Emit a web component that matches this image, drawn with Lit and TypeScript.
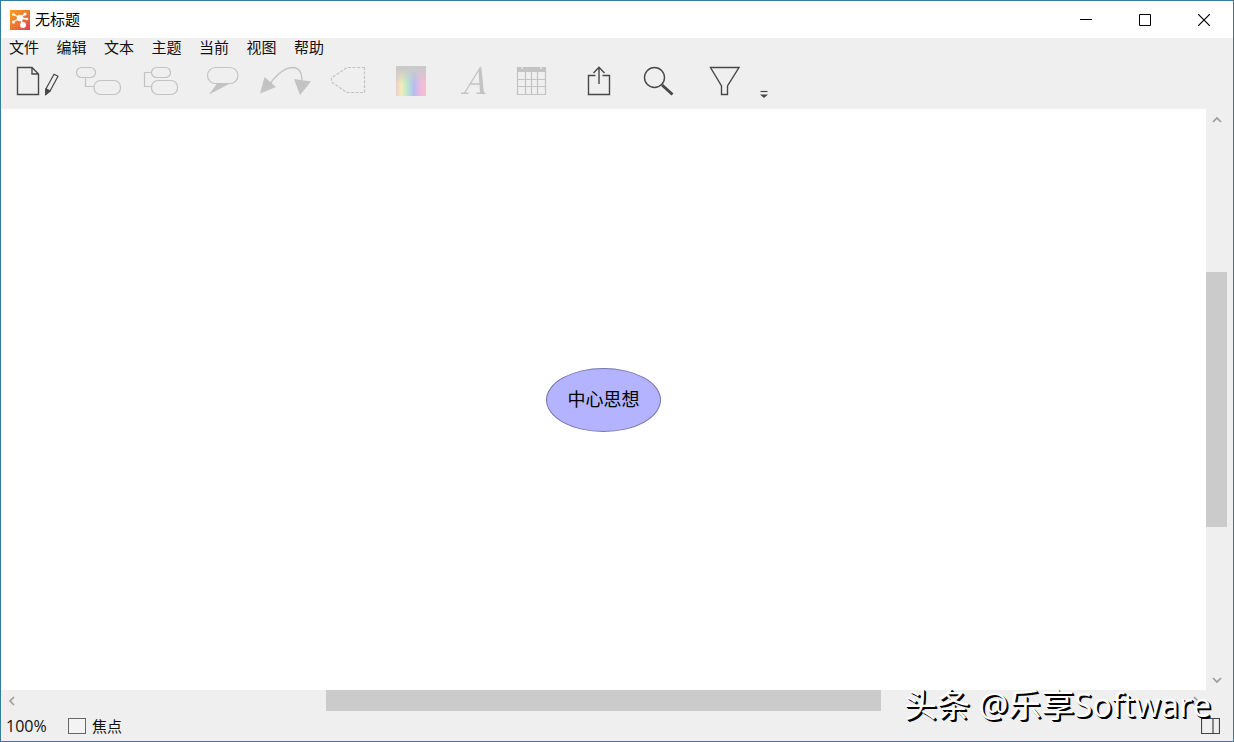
import { LitElement, html, css, svg } from "lit";
import { customElement } from "lit/decorators.js";

const UI_FONT = css`"Noto Sans CJK SC", sans-serif`;

interface Tool {
  name: string;
  left: number;
  width: number;
  enabled: boolean;
  art: unknown;
}

// Every glyph is drawn on the shared grid of the tool strip, which is 44 units high;
// `left` and `width` cut out the part that belongs to the button.
const TOOLS: Tool[] = [
  {
    name: "新建", left: 8, width: 60, enabled: true,
    art: svg`<path d="M17.5 7.5H32L38.5 14V34.5H17.5Z M32 7.5V14H38.5" stroke-width="1.4"/>
      <path d="M54 14.2L58 16.3L50 31L46 34.2L45.8 29.2Z M46.2 29L50 31" stroke-width="1.2"/>
      <path d="M45.8 29.2L50 31L45.6 34.5Z" fill="currentColor"/>`,
  },
  {
    name: "子主题", left: 68, width: 64, enabled: false,
    art: svg`<rect x="76.5" y="7.5" width="19" height="10" rx="5"/>
      <rect x="94" y="20.5" width="26.5" height="14" rx="6.5"/>
      <path d="M85.5 17.5V26.5H94"/>`,
  },
  {
    name: "同级主题", left: 132, width: 60, enabled: false,
    art: svg`<rect x="151.5" y="7.5" width="19" height="10" rx="5"/>
      <rect x="151.5" y="20.5" width="26" height="14" rx="6.5"/>
      <path d="M151.5 12.5H144.5V26.5H151.5"/>`,
  },
  {
    name: "标注", left: 192, width: 60, enabled: false,
    art: svg`<rect x="207.5" y="7.5" width="30.5" height="16" rx="8"/>
      <path d="M217 23.5L209 34.5L230 23.5Z" fill="currentColor" stroke="none"/>`,
  },
  {
    name: "关联", left: 252, width: 68, enabled: false,
    art: svg`<path d="M269 25C277 14 285 7.5 293 7.5Q302 8 302 21" stroke-width="1.3"/>
      <path d="M264.5 17L276 27L260 33.5Z M294 19L311 21.5L300 35Z" fill="currentColor" stroke="none"/>`,
  },
  {
    name: "边界", left: 320, width: 60, enabled: false,
    art: svg`<path d="M364.5 7.5H347L331.5 18V22L347 32.5H364.5Z" stroke-dasharray="3 1.5"/>`,
  },
  {
    name: "颜色", left: 380, width: 60, enabled: false,
    art: svg`<defs>
        <linearGradient id="hue">
          <stop offset="0" stop-color="#efcaca"/><stop offset=".18" stop-color="#f3edb8"/>
          <stop offset=".38" stop-color="#b9e8cc"/><stop offset=".6" stop-color="#b5bdf2"/>
          <stop offset=".82" stop-color="#efb9df"/><stop offset="1" stop-color="#f2c3cb"/>
        </linearGradient>
        <linearGradient id="grey" x2="0" y2="1">
          <stop offset=".1" stop-color="#cacaca"/><stop offset=".6" stop-color="#cacaca" stop-opacity="0"/>
        </linearGradient>
      </defs>
      <rect x="396" y="6" width="30" height="30" fill="url(#hue)" stroke="none"/>
      <rect x="396" y="6" width="30" height="30" fill="url(#grey)" stroke="none"/>`,
  },
  {
    name: "字体", left: 440, width: 64, enabled: false,
    art: svg`<path d="M464.5 33L480 8L482 33M470 24H481" stroke-width="1.3"/>
      <path d="M478.5 10L481.3 7L484 33H480Z" fill="currentColor" stroke="none"/>
      <path d="M461 33.3H468.5M476.5 33.3H485.5" stroke-width="1.4"/>`,
  },
  {
    name: "表格", left: 504, width: 60, enabled: false,
    art: svg`<path d="M517.5 7.5H545.5V34.5H517.5ZM517.5 19.5H545.5M517.5 26.5H545.5M525.5 11V34.5M531.5 11V34.5M537.5 11V34.5"/>
      <path d="M517 8H546V12H517Z" fill="currentColor" stroke="none"/>
      <path d="M522 7V9M541 7V9" stroke="#efefef"/>`,
  },
  {
    name: "共享", left: 564, width: 64, enabled: true,
    art: svg`<path d="M595.5 15.5H588.5V34.5H609.5V15.5H602.5M599 24V7.5M593.5 13L599 7.3L604.5 13" stroke-width="1.4"/>`,
  },
  {
    name: "查找", left: 628, width: 64, enabled: true,
    art: svg`<circle cx="654.5" cy="17.5" r="10" stroke-width="1.4"/>
      <path d="M662 25L672.5 34.5" stroke-width="3"/>`,
  },
  {
    name: "筛选", left: 692, width: 64, enabled: true,
    art: svg`<path d="M710.5 7.5H739L727.5 26V34.5H721.5V26Z" stroke-width="1.4"/>`,
  },
  {
    name: "更多工具", left: 756, width: 16, enabled: true,
    art: svg`<path d="M760.5 31.5H767.5"/><path d="M760 34.5H768L764 38Z" fill="currentColor" stroke="none"/>`,
  },
];

@customElement("scroll-bar")
class ScrollBar extends LitElement {
  static properties = { vertical: { type: Boolean, reflect: true } };
  declare vertical: boolean;

  static styles = css`
    :host { display: flex; background: #efefef; height: 21px; }
    :host([vertical]) { flex-direction: column; width: 21px; height: auto; }
    .step {
      flex: none; display: grid; place-items: center; width: 21px; height: 21px;
      padding: 0; border: 0; background: none; color: #9a9a9a;
    }
    .track { flex: 1; display: flex; justify-content: center; }
    .thumb { width: 47.7%; background: #cbcbcb; }
    :host([vertical]) .track { flex-direction: column; }
    :host([vertical]) .thumb { width: auto; height: 47.3%; }
    svg { fill: none; stroke: currentColor; stroke-width: 1.6; }
  `;

  render() {
    const back = this.vertical ? "M2 8L6 4L10 8" : "M8 2L4 6L8 10";
    const ahead = this.vertical ? "M2 4L6 8L10 4" : "M4 2L8 6L4 10";
    return html`
      <button class="step" aria-label=${this.vertical ? "向上" : "向左"}>
        <svg width="12" height="12"><path d=${back}></path></svg>
      </button>
      <div class="track"><div class="thumb"></div></div>
      <button class="step" aria-label=${this.vertical ? "向下" : "向右"}>
        <svg width="12" height="12"><path d=${ahead}></path></svg>
      </button>`;
  }
}

@customElement("tool-strip")
class ToolStrip extends LitElement {
  static styles = css`
    :host { display: flex; height: 49px; padding-left: 7px; box-sizing: border-box; }
    .tool { flex: none; display: block; padding: 0; border: 0; background: none; height: 44px; color: #484848; }
    .tool:disabled { color: #c3c3c3; }
    svg { display: block; fill: none; stroke: currentColor; stroke-width: 1.2; }
  `;

  render() {
    return TOOLS.map(
      (t) => html`<button class="tool" aria-label=${t.name} ?disabled=${!t.enabled}>
        <svg width=${t.width} height="44" viewBox="${t.left} 0 ${t.width} 44">${t.art}</svg>
      </button>`,
    );
  }
}

@customElement("app-root")
class AppRoot extends LitElement {
  static styles = css`
    :host {
      display: flex; flex-direction: column; position: relative; box-sizing: border-box;
      height: 100vh; border: 1px solid #357b9c; background: #efefef; color: #111;
      font: 15px/20px ${UI_FONT};
    }
    button { font: inherit; color: inherit; padding: 0; border: 0; background: none; }
    svg { display: block; fill: none; stroke: currentColor; }
    .titlebar { display: flex; align-items: center; height: 37px; background: #fff; color: #000; }
    .logo { margin: 0 5px 0 9px; }
    .title { flex: 1; margin: 0; padding-bottom: 2px; font-size: 15px; font-weight: 400; }
    .caption { width: 59px; height: 37px; display: grid; place-items: center; }
    .menubar {
      display: flex; justify-content: space-between; align-items: flex-start;
      width: 315px; height: 22px; margin-left: 8px; line-height: 18px;
    }
    .workspace { flex: 1; min-height: 0; display: grid; grid-template: 1fr 21px / 1fr 21px; padding-right: 6px; }
    .canvas { background: #fff; display: grid; place-items: center; }
    .node {
      display: grid; place-items: center; width: 115px; height: 64px; padding-bottom: 4px; box-sizing: border-box;
      border: 1px solid #7777a8; border-radius: 50%; background: #b3b3ff; color: #000; font-size: 18px;
    }
    .status { display: flex; align-items: center; height: 30px; padding: 0 13px 0 5px; box-sizing: border-box; }
    .zoom { width: 62px; font-size: 16px; font-family: "Open Sans", ${UI_FONT}; }
    .focus { flex: 1; display: flex; align-items: center; gap: 6px; }
    .box { appearance: none; width: 18px; height: 16px; margin: 0; border: 1px solid #666; background: #f3f3f3; }
    .mark {
      position: absolute; right: 22px; bottom: 14px; color: #fff; pointer-events: none;
      font: 33px/44px "Open Sans", ${UI_FONT}; text-shadow: 1px 1px 0 #000, 2px 2px 0 #000;
    }
  `;

  render() {
    return html`
      <header class="titlebar">
        <svg class="logo" width="20" height="20" aria-hidden="true">
          <defs>
            <linearGradient id="flame" x2="1" y2="1">
              <stop stop-color="#f5a21c"></stop><stop offset=".55" stop-color="#ee7338"></stop>
              <stop offset="1" stop-color="#dc3c60"></stop>
            </linearGradient>
          </defs>
          <rect width="20" height="20" fill="url(#flame)" stroke="none"></rect>
          <path d="M10 8L3 4M10 8L15 4M10 8L3 12M10 8L17 9M10 8L13 15" stroke="#fff" stroke-width="1.4"></path>
          <g fill="#fff" stroke="none">
            <circle cx="10" cy="8" r="3.2"></circle><circle cx="13" cy="15" r="3"></circle>
            <circle cx="3.5" cy="4.5" r="1.3"></circle><circle cx="15" cy="4" r="1.5"></circle>
            <circle cx="3.5" cy="12" r="1.6"></circle><circle cx="17" cy="9" r="1.3"></circle>
          </g>
        </svg>
        <h1 class="title">无标题</h1>
        <button class="caption" aria-label="最小化"><svg width="12" height="12"><path d="M0 5.5H12"></path></svg></button>
        <button class="caption" aria-label="最大化"><svg width="12" height="12"><path d="M.5 .5H11.5V11.5H.5Z"></path></svg></button>
        <button class="caption" aria-label="关闭"><svg width="12" height="12"><path d="M0 0L12 12M12 0L0 12" stroke-width="1.2"></path></svg></button>
      </header>
      <nav class="menubar">
        ${["文件", "编辑", "文本", "主题", "当前", "视图", "帮助"].map((m) => html`<button>${m}</button>`)}
      </nav>
      <tool-strip></tool-strip>
      <main class="workspace">
        <div class="canvas"><div class="node">中心思想</div></div>
        <scroll-bar vertical></scroll-bar>
        <scroll-bar></scroll-bar>
      </main>
      <footer class="status">
        <span class="zoom">100%</span>
        <label class="focus"><input class="box" type="checkbox">焦点</label>
        <button aria-label="侧栏">
          <svg width="19" height="16" stroke-width="1.2" color="#444"><path d="M.5 .5H18.5V15.5H.5ZM12 .5V15.5"></path></svg>
        </button>
      </footer>
      <div class="mark">头条 @乐享Software</div>`;
  }
}
